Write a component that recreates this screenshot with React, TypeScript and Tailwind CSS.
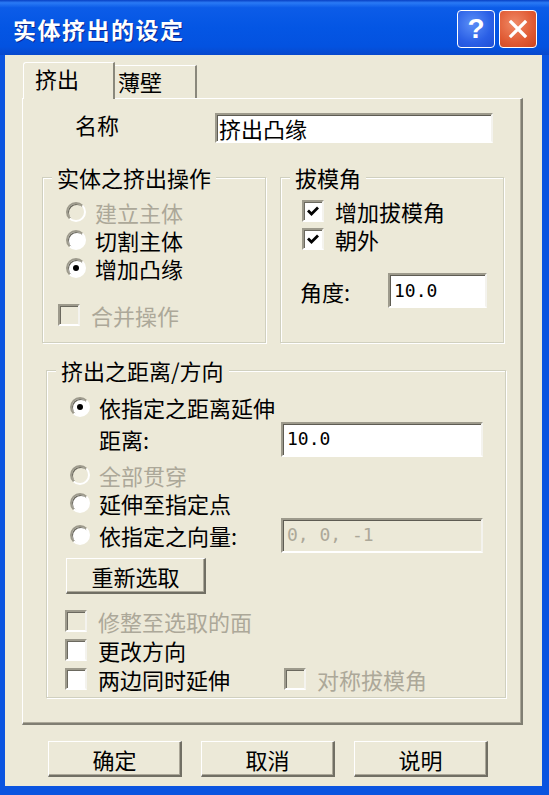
import React from 'react';

const UI = "font-['Noto_Sans_CJK_SC','Noto_Sans',sans-serif]";

function Radio({ label, checked, disabled }: { label: string; checked?: boolean; disabled?: boolean }) {
  return (
    <div className="flex items-center h-[28px]">
      <span
        className={`flex items-center justify-center w-[20px] h-[20px] rounded-full border-2 border-t-[#9d9a8c] border-l-[#9d9a8c] border-b-white border-r-white shadow-[inset_1px_1px_0_#6b695f] ${disabled ? 'bg-[#ece9d8]' : 'bg-white'}`}
      >
        {checked && <span className="w-[6px] h-[6px] rounded-full bg-black" />}
      </span>
      <span className={`block ml-[9px] text-[22px] leading-[22px] ${disabled ? 'text-[#aca899]' : 'text-black'}`}>{label}</span>
    </div>
  );
}

function Check({ label, checked, disabled, h = 'h-[29px]' }: { label: string; checked?: boolean; disabled?: boolean; h?: string }) {
  return (
    <div className={`flex items-center ${h}`}>
      <span
        className={`flex items-center justify-center w-[22px] h-[22px] border-2 border-t-[#9d9a8c] border-l-[#9d9a8c] border-b-white border-r-[#f4f3ee] shadow-[inset_1px_1px_0_#6b695f] ${disabled ? 'bg-[#ece9d8]' : 'bg-white'}`}
      >
        {checked && (
          <svg width="16" height="16" viewBox="0 0 16 16">
            <polyline points="3,7.5 6.5,11 13,4.5" fill="none" stroke="#000" strokeWidth="2.8" />
          </svg>
        )}
      </span>
      <span className={`block ml-[11px] text-[22px] leading-[22px] ${disabled ? 'text-[#aca899]' : 'text-black'}`}>{label}</span>
    </div>
  );
}

function TextBox({ value, w, h, disabled, mono }: { value: string; w: string; h: string; disabled?: boolean; mono?: boolean }) {
  return (
    <div
      className={`${w} ${h} flex items-center pl-[2px] border-2 border-t-[#9d9a8c] border-l-[#9d9a8c] border-b-white border-r-[#f4f3ee] shadow-[inset_1px_1px_0_#5e5c53] ${disabled ? 'bg-[#ece9d8] text-[#aca899]' : 'bg-white text-black'}`}
    >
      <span
        className={`block whitespace-pre ${mono ? "font-['DejaVu_Sans_Mono',monospace] text-[18px] pl-[2px]" : 'text-[22px]'} leading-[22px]`}
      >
        {value}
      </span>
    </div>
  );
}

function Button({ label, w }: { label: string; w: string }) {
  return (
    <button
      className={`${w} h-[36px] flex items-center justify-center bg-[#ece9d8] border-t border-l border-t-white border-l-white border-b-2 border-r-2 border-b-[#716f64] border-r-[#716f64] shadow-[inset_-1px_-1px_0_#aca899] text-[22px] leading-[22px] text-black`}
    >
      {label}
    </button>
  );
}

function Group({ title, className, children }: { title: string; className: string; children: React.ReactNode }) {
  return (
    <div className={`relative border border-[#d0d0bf] shadow-[inset_1px_1px_0_#fff,1px_1px_0_#fff] ${className}`}>
      <span className="absolute left-[9px] -top-[12px] px-[5px] bg-[#ece9d8] text-[22px] leading-[22px] text-black">
        {title}
      </span>
      {children}
    </div>
  );
}

export default function App() {
  return (
    <div className={`w-[549px] h-[795px] flex flex-col bg-[#0a54e0] ${UI}`}>
      {/* title bar */}
      <div className="h-[55px] flex items-center pt-[3px] pl-[13px] pr-[12px] bg-[linear-gradient(to_bottom,#0840c4_0%,#2a7af5_5%,#0c5ce8_14%,#0456e4_50%,#0352e0_85%,#0848cc_100%)]">
        <span className="text-[23px] tracking-[1.5px] font-bold text-white [text-shadow:1px_1px_0_#0a2690]">实体挤出的设定</span>
        <div className="ml-auto flex gap-[4px]">
          <div className="w-[38px] h-[38px] rounded-[4px] border border-white flex items-center justify-center bg-[radial-gradient(circle_at_40%_35%,#5b8ff7,#2a5fe6_60%,#1e4fd6)]">
            <span className="font-['Liberation_Sans',sans-serif] text-[28px] font-bold leading-none text-white">?</span>
          </div>
          <div className="w-[38px] h-[38px] rounded-[4px] border border-white flex items-center justify-center bg-[radial-gradient(circle_at_40%_35%,#f08a66,#e05a33_60%,#cc4420)]">
            <svg width="22" height="22" viewBox="0 0 22 22">
              <path d="M4 4 L18 18 M18 4 L4 18" stroke="#fff" strokeWidth="3.2" strokeLinecap="square" />
            </svg>
          </div>
        </div>
      </div>

      {/* client area */}
      <div className="flex-1 ml-[5px] mr-[7px] mb-[9px] bg-[#ece9d8] flex flex-col">
        {/* tabs */}
        <div className="h-[43px] flex items-end ml-[18px]">
          <div className="relative z-10 -mb-px w-[92px] h-[37px] pt-[4px] pl-[11px] bg-[#ece9d8] border-t border-l border-white border-r-2 border-r-[#8a887c] rounded-tl-[3px] text-[22px] leading-[22px] text-black">
            挤出
          </div>
          <div className="w-[82px] h-[33px] pt-[4px] pl-[3px] border-t border-white border-r-2 border-r-[#8a887c] text-[22px] leading-[22px] text-black">
            薄壁
          </div>
        </div>

        {/* tab page */}
        <div className="ml-[17px] w-[501px] h-[627px] border-t border-l border-white border-r-2 border-b-2 border-r-[#807e72] border-b-[#807e72] shadow-[inset_-1px_-1px_0_#aca899] pt-[14px] flex flex-col">
          {/* name */}
          <div className="flex items-start">
            <span className="ml-[52px] w-[140px] text-[22px] leading-[22px] text-black">名称</span>
            <TextBox value="挤出凸缘" w="w-[278px]" h="h-[30px]" />
          </div>

          {/* two groups */}
          <div className="flex mt-[34px] ml-[19px] gap-[14px]">
            <Group title="实体之挤出操作" className="w-[224px] h-[166px] pt-[20px]">
              <div className="pl-[23px]">
                <Radio label="建立主体" disabled />
                <Radio label="切割主体" />
                <Radio label="增加凸缘" checked />
              </div>
              <div className="pl-[15px] mt-[18px]">
                <Check label="合并操作" disabled />
              </div>
            </Group>
            <Group title="拔模角" className="w-[224px] h-[166px] pt-[19px]">
              <div className="pl-[21px]">
                <Check label="增加拔模角" checked h="h-[28px]" />
                <Check label="朝外" checked h="h-[28px]" />
              </div>
              <div className="flex items-center mt-[20px] pl-[19px]">
                <span className="w-[88px] text-[22px] leading-[22px] text-black">角度:</span>
                <TextBox value="10.0" w="w-[99px]" h="h-[35px]" mono />
              </div>
            </Group>
          </div>

          {/* distance / direction */}
          <Group title="挤出之距离/方向" className="mt-[27px] ml-[23px] w-[460px] h-[328px] pt-[22px]">
            <div className="pl-[23px]">
              <Radio label="依指定之距离延伸" checked />
            </div>
            <div className="flex items-center h-[36px]">
              <span className="ml-[52px] w-[182px] text-[22px] leading-[22px] text-black">距离:</span>
              <TextBox value="10.0" w="w-[202px]" h="h-[35px]" mono />
            </div>
            <div className="pl-[23px] mt-[4px]">
              <Radio label="全部贯穿" disabled />
              <Radio label="延伸至指定点" />
            </div>
            <div className="flex items-center h-[36px] pl-[23px]">
              <div className="w-[211px]">
                <Radio label="依指定之向量:" />
              </div>
              <TextBox value="0, 0, -1" w="w-[202px]" h="h-[35px]" disabled mono />
            </div>
            <div className="ml-[19px] mt-[5px]">
              <Button label="重新选取" w="w-[140px]" />
            </div>
            <div className="pl-[18px] mt-[12px]">
              <Check label="修整至选取的面" disabled />
              <Check label="更改方向" />
              <div className="flex">
                <div className="w-[219px]">
                  <Check label="两边同时延伸" />
                </div>
                <Check label="对称拔模角" disabled />
              </div>
            </div>
          </Group>
        </div>

        {/* dialog buttons */}
        <div className="flex gap-[19px] ml-[43px] mt-[16px]">
          <Button label="确定" w="w-[134px]" />
          <Button label="取消" w="w-[134px]" />
          <Button label="说明" w="w-[134px]" />
        </div>
      </div>
    </div>
  );
}
